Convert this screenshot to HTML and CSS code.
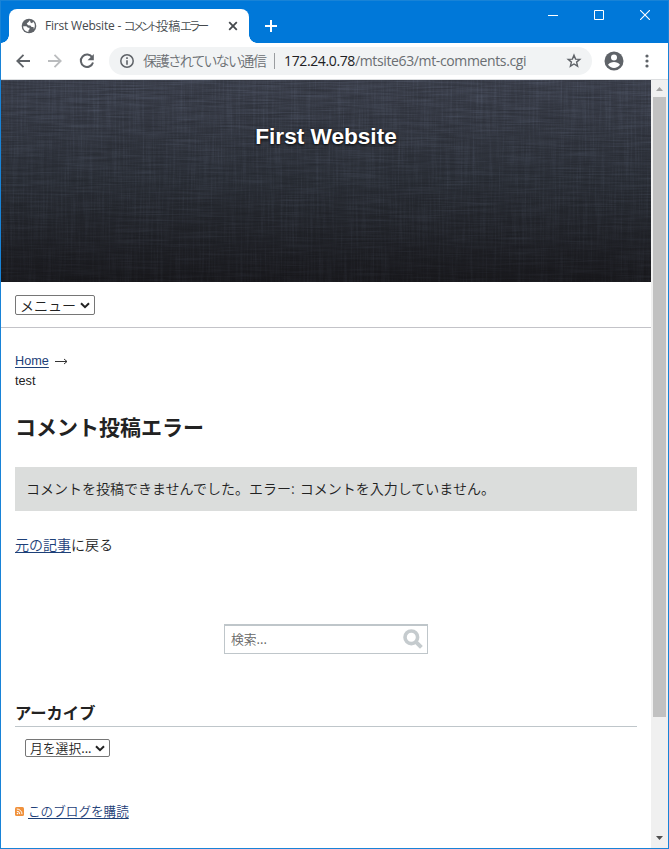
FILE: index.html
```html
<!DOCTYPE html>
<html lang="ja">
<head>
<meta charset="utf-8">
<title>First Website - コメント投稿エラー</title>
<link rel="stylesheet" href="styles.css">
</head>
<body>
<div class="window">
  <div class="tabbar">
    <div class="tab">
      <svg class="globe" width="16" height="16" viewBox="0 0 16 16"><circle cx="8" cy="8" r="7.3" fill="#5f6368"/><path d="M2.200 8.200h3.200l1.600 1.500h1.500v1.500l-1 1.100v1.500C4.200 13.500 2 11 2.200 8.200zM9 2.200 7.200 4.300 5.700 5.500 7 7.200l2.400.2 1.200 1.500 1.900.2.300 2C14.500 8.500 14 5.200 12.200 3.700L11 5.200 9.500 4.500z" fill="#fff"/></svg>
      <span class="tab-title"><span class="tab-latin">First Website - </span><span class="tab-kana">コメント<b>投稿</b>エラー</span></span>
      <svg class="close" width="10" height="10" viewBox="0 0 10 10"><path d="M1.200 1.200l7.600 7.600M8.800 1.200 1.200 8.800" stroke="#45494d" stroke-width="1.800"/></svg>
    </div>
    <svg class="newtab" width="14" height="14" viewBox="0 0 14 14"><path d="M7 1v12M1 7h12" stroke="#fff" stroke-width="2"/></svg>
    <div class="controls">
      <svg width="10" height="10"><path d="M0 5.500h10" stroke="#fff"/></svg>
      <svg width="10" height="10"><path d="M.5.500h9v9h-9z" fill="none" stroke="#fff"/></svg>
      <svg width="10" height="10"><path d="M0 0l10 10M10 0 0 10" stroke="#fff" stroke-width="1.100"/></svg>
    </div>
  </div>
  <div class="toolbar">
    <svg class="tool" width="14" height="14" viewBox="0 0 14 14"><path d="M14 7H1.500M7.500 .8 1.300 7l6.200 6.200" fill="none" stroke="#5f6368" stroke-width="1.800"/></svg>
    <svg class="tool" width="14" height="14" viewBox="0 0 14 14"><path d="M0 7h12.500M6.500 .8 12.700 7l-6.200 6.200" fill="none" stroke="#babcbe" stroke-width="1.800"/></svg>
    <svg class="tool" width="16" height="16" viewBox="0 0 16 16"><path d="M13.300 4.500A6.200 6.200 0 1 0 14 9.500" fill="none" stroke="#5f6368" stroke-width="2"/><path d="M14.800 1v6.200H8.600z" fill="#5f6368"/></svg>
    <div class="omnibox">
      <svg width="14" height="14" viewBox="0 0 14 14"><circle cx="7" cy="7" r="6.200" fill="none" stroke="#5f6368" stroke-width="1.500"/><path d="M7 3.200v1.700M7 6.200v4.500" stroke="#5f6368" stroke-width="1.600"/></svg>
      <span class="insecure">保護されていない通信</span>
      <span class="divider"></span>
      <span class="url"><span class="host">172.24.0.78</span>/mtsite63/mt-comments.cgi</span>
      <svg class="star" width="16" height="16" viewBox="0 0 16 16"><path d="M8 2.200 9.600 6.100l4.200.3-3.200 2.700 1 4.100L8 11l-3.600 2.200 1-4.100L2.200 6.400l4.200-.3z" fill="none" stroke="#5f6368" stroke-width="1.400"/></svg>
    </div>
    <svg class="avatar" width="20" height="20" viewBox="0 0 20 20"><circle cx="10" cy="10" r="9.500" fill="#5f6368"/><circle cx="10" cy="6.500" r="3" fill="#fff"/><path d="M4 13.800c1.300-2 3.600-2.900 6-2.900s4.700.9 6 2.900c-1.300 2-3.600 3.100-6 3.100s-4.700-1.100-6-3.100z" fill="#fff"/></svg>
    <svg class="dots" width="4" height="14" viewBox="0 0 4 14"><g fill="#5f6368"><circle cx="2" cy="2" r="1.600"/><circle cx="2" cy="7" r="1.600"/><circle cx="2" cy="12" r="1.600"/></g></svg>
  </div>
  <div class="viewport">
    <div class="page">
      <header class="banner">
        <svg class="weave" width="650" height="202">
          <filter id="across" x="0" y="0" width="100%" height="100%" color-interpolation-filters="sRGB"><feTurbulence type="fractalNoise" baseFrequency=".018 .5" numOctaves="3" seed="4"/><feColorMatrix values="0 0 0 0 .5  0 0 0 0 .55  0 0 0 0 .66  .8 0 0 0 -.34"/></filter>
          <filter id="down" x="0" y="0" width="100%" height="100%" color-interpolation-filters="sRGB"><feTurbulence type="fractalNoise" baseFrequency=".5 .018" numOctaves="3" seed="9"/><feColorMatrix values="0 0 0 0 .5  0 0 0 0 .55  0 0 0 0 .66  .8 0 0 0 -.34"/></filter>
          <filter id="shade" x="0" y="0" width="100%" height="100%" color-interpolation-filters="sRGB"><feTurbulence type="fractalNoise" baseFrequency=".03 .7" numOctaves="2" seed="15"/><feColorMatrix values="0 0 0 0 0  0 0 0 0 0  0 0 0 0 0  .8 0 0 0 -.3"/></filter>
          <linearGradient id="fade" x2="0" y2="1"><stop stop-color="#aaa"/><stop offset="1" stop-color="#4c4c4c"/></linearGradient>
          <mask id="dim"><rect width="650" height="202" fill="url(#fade)"/></mask>
          <g mask="url(#dim)"><rect width="650" height="202" filter="url(#across)"/><rect width="650" height="202" filter="url(#down)"/><rect width="650" height="202" filter="url(#shade)"/></g>
        </svg>
        <h1>First Website</h1>
      </header>
      <nav class="menu">
        <button class="select menu-select"><span>メニュー</span><svg width="10" height="7" viewBox="0 0 10 7"><path d="M1 1.200l4 4 4-4" fill="none" stroke="#222" stroke-width="2"/></svg></button>
      </nav>
      <main>
        <div class="crumbs"><a href="#">Home</a><svg width="13" height="7" viewBox="0 0 13 7"><path d="M0 3.500h12M9 1l3 2.500L9 6" fill="none" stroke="#333"/></svg><br>test</div>
        <h2>コメント投稿エラー</h2>
        <div class="message">コメントを投稿できませんでした。エラー: <span>コメントを入力していません。</span></div>
        <p class="back"><a href="#">元の記事</a>に戻る</p>
        <div class="search"><span>検索...</span><svg width="20" height="20" viewBox="0 0 20 20"><circle cx="8.300" cy="8.300" r="6.300" fill="none" stroke="#c5cbce" stroke-width="3.600"/><path d="M12.600 12.600l5.800 5.800" stroke="#c5cbce" stroke-width="4"/></svg></div>
        <h3>アーカイブ</h3>
        <button class="select month-select"><span>月を選択...</span><svg width="10" height="7" viewBox="0 0 10 7"><path d="M1 1.200l4 4 4-4" fill="none" stroke="#222" stroke-width="2"/></svg></button>
        <p class="feed"><svg width="9" height="9" viewBox="0 0 9 9"><rect width="9" height="9" rx="1.500" fill="#f0913c"/><path d="M1.800 4.200a3 3 0 0 1 3 3M1.800 2a5.200 5.200 0 0 1 5.200 5.200" fill="none" stroke="#fff" stroke-width="1"/><circle cx="2.500" cy="6.600" r=".8" fill="#fff"/></svg><a href="#">このブログを購読</a></p>
      </main>
    </div>
    <div class="scrollbar">
      <svg width="7" height="4" viewBox="0 0 7 4"><path d="M0 4 3.500 0 7 4z" fill="#a3a3a3"/></svg>
      <div class="thumb"></div>
      <svg class="down" width="7" height="4" viewBox="0 0 7 4"><path d="M0 0 3.500 4 7 0z" fill="#505050"/></svg>
    </div>
  </div>
</div>
</body>
</html>
```
FILE: styles.css
```css
* { box-sizing: border-box; }
body { margin: 0; font-family: "Liberation Sans", "Noto Sans CJK JP", sans-serif; color: #222; }
svg { display: block; flex: none; }
h1, h2, h3, p { margin: 0; }
a { color: #1d4078; text-underline-offset: 2px; }
.window { width: 669px; height: 849px; border: 1px solid #1883d7; background: #fff; display: flex; flex-direction: column; overflow: hidden; }
.tabbar { height: 42px; background: #0078d9; display: flex; flex: none; }
.tab { position: relative; width: 240px; height: 34px; margin: 8px 0 0 8px; background: #fff; border-radius: 8px 8px 0 0; display: flex; align-items: center; padding: 0 11px 0 12px; }
.tab::before, .tab::after { content: ""; position: absolute; bottom: 0; width: 8px; height: 8px; }
.tab::before { left: -8px; background: radial-gradient(circle at 0 0, #0078d9 7.5px, #fff 8px); }
.tab::after { right: -8px; background: radial-gradient(circle at 100% 0, #0078d9 7.5px, #fff 8px); }
.tab-title { margin-left: 8px; font: 12px/20px "Open Sans", "Noto Sans CJK JP", sans-serif; color: #45494d; white-space: pre; display: flex; }
.tab-latin { letter-spacing: -.2px; }
.tab-kana { font-family: "Noto Sans CJK JP", sans-serif; font-feature-settings: "palt"; letter-spacing: -2.400px; font-weight: 350; }
.tab-kana b { font-weight: inherit; letter-spacing: 0; }
.close { margin-left: auto; }
.newtab { margin: 18px 0 0 15px; }
.controls { display: flex; gap: 36px; margin: 9px 18px 0 auto; }
.toolbar { height: 37px; flex: none; border-bottom: 1px solid #dcdee0; display: flex; align-items: center; padding: 0 19px 0 15px; }
.tool { margin-right: 18px; }
.tool + .tool { margin-right: 17px; }
.tool + .tool + .tool { margin-right: 14px; }
.omnibox { width: 483px; height: 28px; border-radius: 14px; background: #f1f3f4; display: flex; align-items: center; padding: 0 10px 0 11px; font: 14px/28px "Open Sans", "Noto Sans CJK JP", sans-serif; color: #6a6e72; white-space: nowrap; }
.insecure { width: 123px; margin-left: 9px; font-family: "Noto Sans CJK JP", sans-serif; font-weight: 350; font-feature-settings: "palt"; letter-spacing: -1.250px; position: relative; top: -1px; }
.divider { width: 1px; height: 16px; background: #9a9da0; margin: 0 9px 0 8px; }
.url { letter-spacing: -.37px; }
.host { color: #202124; }
.star { margin-left: auto; }
.avatar { margin-left: 12px; }
.dots { margin-left: auto; }
.viewport { flex: 1; display: flex; min-height: 0; }
.page { flex: 1; min-width: 0; }
.scrollbar { width: 17px; background: #f0f0f0; display: flex; flex-direction: column; align-items: center; padding: 7px 0 8px; }
.thumb { width: 13px; height: 620px; margin-top: 6px; background: #c1c1c1; }
.down { margin-top: auto; }
.banner { position: relative; height: 202px; background: linear-gradient(#3b3f4b, #2a2e36 50%, #18181c); }
.weave { position: absolute; inset: 0; opacity: .7; }
h1 { position: relative; padding-top: 43px; font-size: 22.600px; line-height: 27px; text-align: center; color: #fff; text-shadow: 0 1px 3px #000; }
.menu { height: 46px; border-bottom: 1px solid #c3c3c8; padding: 13px 0 0 14px; }
.select { display: flex; align-items: center; justify-content: space-between; border: 1px solid #767676; border-radius: 2px; background: #fff; color: #222; padding: 0 4px; margin: 0; font-family: "Noto Sans CJK JP", sans-serif; font-weight: 350; white-space: nowrap; }
.menu-select { width: 80px; height: 20px; font-size: 14px; line-height: 18px; }
.month-select { width: 85px; height: 18px; margin: 12px 0 0 10px; font-size: 12.800px; line-height: 16px; }
main { padding: 23px 14px 0; }
.crumbs { font-size: 12.700px; line-height: 20px; }
.crumbs svg { display: inline-block; margin-left: 6px; }
h2 { margin-top: 20px; font-size: 21px; line-height: 34px; }
.message { margin-top: 22px; height: 44px; padding-left: 11px; line-height: 42px; font-size: 14px; font-weight: 350; background: #dbdddc; font-family: "Noto Sans CJK JP", sans-serif; }
.message span { margin-left: 2px; }
.back { margin-top: 21px; font: 350 14px/24px "Noto Sans CJK JP", sans-serif; }
.search { width: 204px; height: 30px; margin: 68px auto 0; border: 1px solid #bfc6ca; border-top-width: 2px; display: flex; align-items: center; justify-content: space-between; padding: 0 4px 2px 6px; font: 350 12.800px/26px "Noto Sans CJK JP", sans-serif; color: #666; }
h3 { margin-top: 46px; height: 27px; border-bottom: 1px solid #bfc6ca; font-size: 16.300px; line-height: 26px; }
.feed { margin-top: 42px; display: flex; align-items: center; gap: 4px; font: 350 12.600px/24px "Noto Sans CJK JP", sans-serif; }
```
